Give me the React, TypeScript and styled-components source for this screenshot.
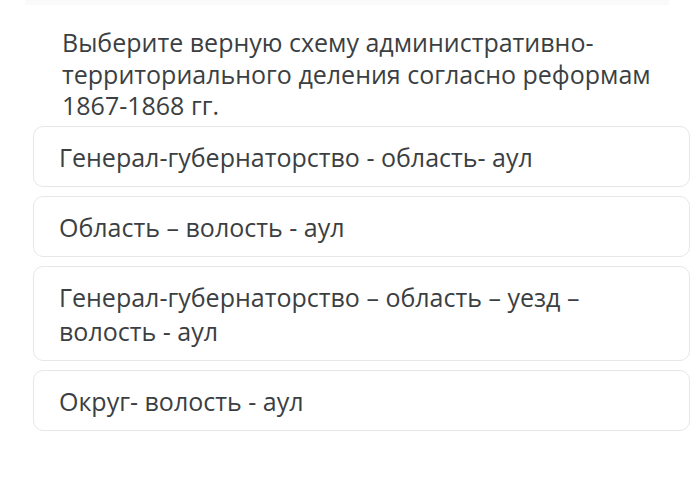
import React from 'react'
import styled, { createGlobalStyle } from 'styled-components'

const GlobalStyle = createGlobalStyle`
  html, body {
    margin: 0;
    padding: 0;
    background: #ffffff;
  }
  body {
    font-family: 'Open Sans', 'Noto Sans', sans-serif;
    color: #3c3f42;
  }
`

const Page = styled.div`
  width: 694px;
  height: 501px;
  overflow: hidden;
  display: flex;
  flex-direction: column;
`

const TopStrip = styled.div`
  height: 5px;
  margin: 0 25px 0 25px;
  background: #fafafa;
`

const Question = styled.p`
  margin: 22px 0 4px 62px;
  font-size: 25px;
  line-height: 31.5px;
  color: #3c3f42;
  width: 610px;
`

const Options = styled.ul`
  list-style: none;
  margin: 0 4px 0 33px;
  padding: 0;
  display: flex;
  flex-direction: column;
  gap: 9px;
`

const Option = styled.li`
  border: 1px solid #e6e8e8;
  border-radius: 10px;
  background: #ffffff;
  padding: 13px 20px 12px 25px;
  font-size: 25px;
  line-height: 34px;
  color: #3c3f42;
`

const options = [
  'Генерал-губернаторство - область- аул',
  'Область – волость - аул',
  'Генерал-губернаторство – область – уезд – волость - аул',
  'Округ- волость - аул',
]

export default function App() {
  return (
    <Page>
      <GlobalStyle />
      <TopStrip />
      <Question>
        Выберите верную схему административно-территориального деления согласно реформам 1867-1868 гг.
      </Question>
      <Options>
        {options.map((text) => (
          <Option key={text}>{text}</Option>
        ))}
      </Options>
    </Page>
  )
}
